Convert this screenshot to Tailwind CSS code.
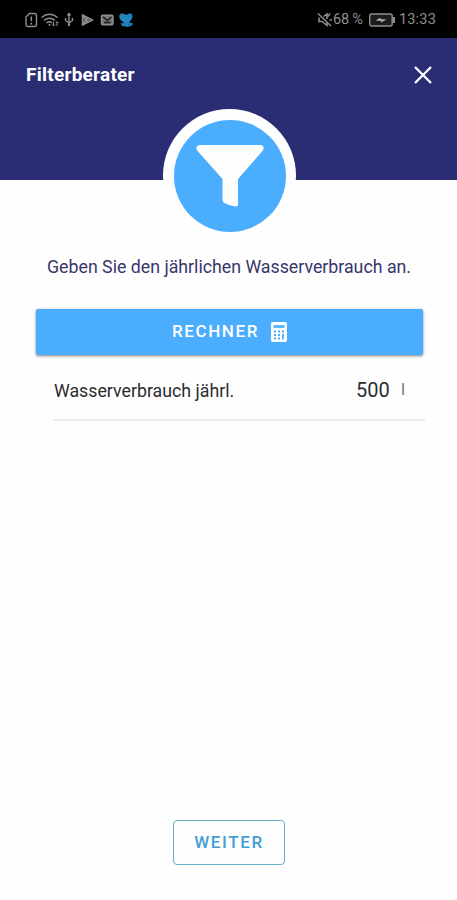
<!DOCTYPE html>
<html lang="de">
<head>
<meta charset="utf-8">
<title>Filterberater</title>
<script src="https://cdn.jsdelivr.net/npm/@tailwindcss/browser@4"></script>
</head>
<body class="bg-white">
<div class="flex h-[900px] w-[457px] flex-col overflow-hidden bg-[#fefefe] font-[Roboto,sans-serif]">
  <!-- Status bar -->
  <div class="flex h-[38px] shrink-0 items-center justify-between bg-black pt-[2px] pr-[21px] pl-[25px] text-[#8f8f8f]">
    <svg class="h-4 w-[112px]" viewBox="0 0 112 16" fill="none" stroke="currentColor" stroke-width="1.4">
      <path d="M4.5 1.5H9.500Q11.500 1.500 11.500 3.500V12.500Q11.500 14.500 9.500 14.500H3Q1 14.500 1 12.500V5Z"/>
      <path d="M6.300 4.500V9M6.300 10.500V12.500" stroke-width="1.500"/>
      <path d="M16.500 5.500Q24.500-1 32.500 5.500M19 8.500Q24.500 4 30 8.500M21.500 11Q24.500 8.500 27 11"/>
      <circle cx="24.500" cy="12.800" r="1" fill="currentColor" stroke="none"/>
      <path d="M28.500 9.500V14M27 12.500L28.500 14L30 12.500M32 14V10M30.700 11L32 9.500L33.300 11" stroke-width="1"/>
      <path d="M44 2V14M40.500 6V8.500L44 11.200L47.500 8.500V6M42.500 3.500L44 1.500L45.500 3.500"/>
      <circle cx="44" cy="13" r="1.200" fill="currentColor" stroke="none"/>
      <path d="M57.500 3L67.500 8L57.500 13.200ZM57.500 3L63 10.500M57.500 13.200L63 5.500" fill="#555"/>
      <rect x="76.500" y="3.200" width="11.500" height="9.600" rx="1" fill="#777"/>
      <path d="M78 5L82.300 8.300L86.500 5M79 10.500H85.500" stroke="#161616"/>
      <path d="M96 1.500Q99 1 101.200 3Q103.500 1 106.300 1.500Q108.800 4.500 106 8L104 10.200L108 11.500L107 13.500L103 14.800L97 14L95.500 11.500L99 10.500Q93 7 94.500 3Z" fill="#2286be" stroke="none"/>
      <path d="M96.500 11.800H101M103 12.200H106" stroke="#0c587f" stroke-width=".8"/>
    </svg>
    <div class="flex items-center text-[14.500px] leading-4">
      <svg class="h-4 w-4" viewBox="0 0 16 16" fill="none" stroke="currentColor" stroke-width="1.500">
        <path d="M1 1.500L14 14M2 5.500V9.500H5L10 13.500V10.500M6.500 4.500L10 2V7M13 1.500L11 4.500M12.500 8H15"/>
      </svg>
      <span class="w-[36px] whitespace-nowrap">68&thinsp;%</span>
      <svg class="h-4 w-7" viewBox="0 0 28 16" fill="none" stroke="currentColor" stroke-width="1.400">
        <rect x="0.700" y="2" width="22.500" height="12" rx="2" fill="#1c1c1c"/>
        <path d="M25 5V11" stroke-width="2"/>
        <path d="M6.500 8.500L11.500 5.500V7L17.500 7.500L12 10.500V9Z" fill="#aaa" stroke="none"/>
      </svg>
      <span class="ml-[2px] whitespace-nowrap tracking-[0.200px]">13:33</span>
    </div>
  </div>

  <!-- App header -->
  <header class="relative h-[142px] shrink-0 bg-[#2a2d74]">
    <div class="flex h-[73px] items-center justify-between pr-[24px] pl-[26px]">
      <h1 class="text-[19px] leading-6 font-bold tracking-[0.250px] text-white">Filterberater</h1>
      <svg class="h-[20px] w-[20px]" viewBox="0 0 20 20" fill="none" stroke="#fff" stroke-width="2.300"><path d="M2 2L18 18M18 2L2 18"/></svg>
    </div>
    <div class="absolute top-[71px] left-[163px] flex size-[133px] items-center justify-center rounded-full bg-[#fefefe]">
      <svg class="size-[112px] rounded-full bg-[#4aadfd]" viewBox="0 0 112 112">
        <path d="M26 25H86Q89 25 89.500 27.500Q90 29 88 31.500L64 59V84.500Q64 87 61.500 86.500Q55 85.500 50.500 83Q48.500 82 48.500 79V59L24 31.500Q22 29 22.500 27.500Q23 25 26 25Z" fill="#fefefe"/>
      </svg>
    </div>
  </header>

  <main class="flex flex-1 flex-col">
    <p class="mt-[75px] pl-[47px] text-[17.750px] leading-6 whitespace-nowrap text-[#38366b]">Geben Sie den jährlichen Wasserverbrauch an.</p>
    <button class="mt-[30px] ml-[36px] flex h-[46px] w-[387px] shrink-0 items-center rounded-[2px] bg-[#4aadfd] pl-[136px] text-[17px] font-medium tracking-[1.600px] text-white shadow-[0_1px_3px_rgba(0,0,0,0.500)]">
      <span class="w-[99px] text-left">RECHNER</span>
      <svg class="h-5 w-4" viewBox="0 0 16 20">
        <rect width="16" height="20" rx="2" fill="#fff"/>
        <path d="M2.500 4.500H13.500" stroke="#4aadfd" stroke-width="2.600"/>
        <path d="M3 9.500H5M7 9.500H9M11 9.500H13M3 13H5M7 13H9M3 16.500H5M7 16.500H9" stroke="#4aadfd" stroke-width="1.800"/>
        <path d="M12 12V17.500" stroke="#4aadfd" stroke-width="1.800"/>
      </svg>
    </button>
    <div class="mt-[6px] ml-[53px] flex h-[60px] w-[372px] shrink-0 items-center border-b-2 border-[#ebebeb] pt-[2px] pl-px text-[#2c2c2c]">
      <span class="grow text-[17.750px]">Wasserverbrauch jährl.</span>
      <span class="w-[45px] pb-[2px] text-[20px]">500</span>
      <span class="w-[24px] pb-[3px] text-[17px] text-[#777]">l</span>
    </div>
    <div class="mt-auto mb-[35px] flex justify-center pl-px">
      <button class="h-[45px] w-[112px] rounded-[4px] border border-[#65afc9] text-[17px] font-medium tracking-[1.600px] text-[#439dd7]">WEITER</button>
    </div>
  </main>
</div>
</body>
</html>
